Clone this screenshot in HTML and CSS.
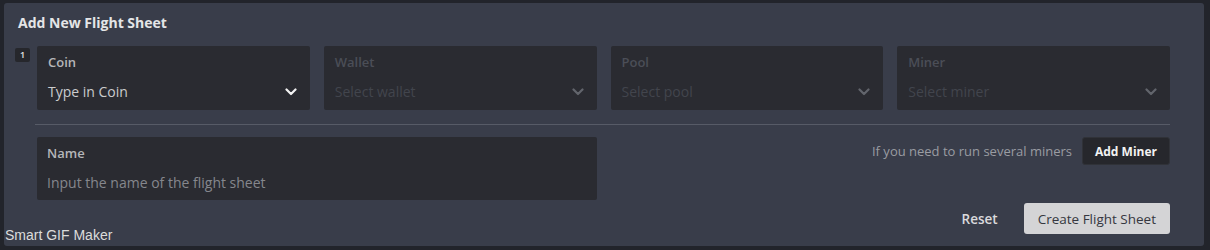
FILE: index.html
```html
<!DOCTYPE html>
<html>
  <head>
    <title>Add New Flight Sheet</title>
    <link rel="stylesheet" href="styles.css">
  </head>
  <body>
    <div class="panel">
      <h2 class="title">Add New Flight Sheet</h2>

      <div class="miner-row">
        <span class="badge">1</span>
        <div class="fields">
          <div class="field">
            <div class="label">Coin</div>
            <div class="value">
              <span>Type in Coin</span>
              <svg class="chevron" width="12" height="8" viewBox="0 0 12 8"><path d="M1.5 1.5 L6 6 L10.5 1.5" /></svg>
            </div>
          </div>
          <div class="field disabled">
            <div class="label">Wallet</div>
            <div class="value">
              <span>Select wallet</span>
              <svg class="chevron" width="12" height="8" viewBox="0 0 12 8"><path d="M1.5 1.5 L6 6 L10.5 1.5" /></svg>
            </div>
          </div>
          <div class="field disabled">
            <div class="label">Pool</div>
            <div class="value">
              <span>Select pool</span>
              <svg class="chevron" width="12" height="8" viewBox="0 0 12 8"><path d="M1.5 1.5 L6 6 L10.5 1.5" /></svg>
            </div>
          </div>
          <div class="field disabled">
            <div class="label">Miner</div>
            <div class="value">
              <span>Select miner</span>
              <svg class="chevron" width="12" height="8" viewBox="0 0 12 8"><path d="M1.5 1.5 L6 6 L10.5 1.5" /></svg>
            </div>
          </div>
        </div>
      </div>

      <div class="divider"></div>

      <div class="name-row">
        <div class="field name-field">
          <div class="label">Name</div>
          <div class="value placeholder">Input the name of the flight sheet</div>
        </div>
        <div class="add-miner">
          <span class="hint">If you need to run several miners</span>
          <button class="btn-dark">Add Miner</button>
        </div>
      </div>

      <div class="actions">
        <button class="btn-link">Reset</button>
        <button class="btn-light">Create Flight Sheet</button>
      </div>
    </div>

    <div class="watermark">Smart GIF Maker</div>
  </body>
</html>
```

FILE: styles.css
```css
* {
    margin: 0;
    box-sizing: border-box;
}
html, body {
    height: 100%;
}
body {
    background: #22242b;
    font-family: "Open Sans", "Noto Sans", sans-serif;
    padding: 3px 0 0 4px;
    position: relative;
}
.panel {
    width: 1200px;
    height: 243px;
    background: #393d4a;
    border-radius: 3px;
    padding: 10px 34px 0 11px;
}
.title {
    margin-left: 3px;
    font-size: 14px;
    line-height: 19px;
    font-weight: 700;
    color: #e4e5e7;
}
.miner-row {
    display: flex;
    margin-top: 14px;
}
.badge {
    width: 15px;
    height: 14px;
    margin-top: 2px;
    margin-right: 7px;
    border-radius: 2px;
    background: #26272c;
    color: #e8e8e8;
    font-size: 9px;
    line-height: 14px;
    font-weight: 600;
    text-align: center;
}
.fields {
    flex: 1;
    display: grid;
    grid-template-columns: repeat(4, 1fr);
    gap: 14px;
}
.field {
    height: 64px;
    background: #2a2b31;
    border-radius: 2px;
    padding: 7px 13px 0 11px;
}
.label {
    font-size: 13px;
    line-height: 18px;
    font-weight: 600;
    color: #b5b6b9;
}
.value {
    display: flex;
    align-items: center;
    justify-content: space-between;
    margin-top: 11px;
    font-size: 14px;
    line-height: 20px;
    color: #cbccce;
}
.chevron path {
    fill: none;
    stroke: #f2f2f2;
    stroke-width: 2.2;
    stroke-linecap: round;
    stroke-linejoin: round;
}
.disabled .label {
    color: #4b4e57;
}
.disabled .value {
    color: #42454d;
}
.disabled .chevron path {
    stroke: #62656c;
}
.divider {
    height: 1px;
    margin: 14px 0 0 20px;
    background: #575b67;
}
.name-row {
    display: grid;
    grid-template-columns: repeat(4, 1fr);
    gap: 14px;
    margin: 12px 0 0 22px;
}
.name-field {
    grid-column: span 2;
    height: 63px;
    padding-left: 10px;
}
.value.placeholder {
    color: #85878d;
}
.add-miner {
    grid-column: span 2;
    display: flex;
    justify-content: flex-end;
    align-items: flex-start;
    gap: 10px;
}
.hint {
    font-size: 13px;
    line-height: 28px;
    color: #9a9ca2;
}
button {
    font-family: inherit;
    border: 0;
    cursor: pointer;
}
.btn-dark {
    height: 28px;
    padding: 0 12px;
    background: #26272c;
    border: 1px solid #303238;
    border-radius: 3px;
    color: #f2f2f2;
    font-size: 12px;
    font-weight: 700;
}
.actions {
    display: flex;
    justify-content: flex-end;
    margin-top: 3px;
    gap: 13px;
}
.btn-link {
    height: 31px;
    padding: 0 13px;
    background: none;
    color: #dadadc;
    font-size: 13.5px;
    font-weight: 600;
}
.btn-light {
    height: 31px;
    padding: 0 14px;
    background: #d4d4d6;
    border-radius: 3px;
    color: #353740;
    font-size: 13.5px;
}
.watermark {
    position: absolute;
    left: 5px;
    top: 227px;
    font-family: "Liberation Sans", Arial, sans-serif;
    font-size: 14px;
    line-height: 17px;
    color: #dcdcdc;
}
```
